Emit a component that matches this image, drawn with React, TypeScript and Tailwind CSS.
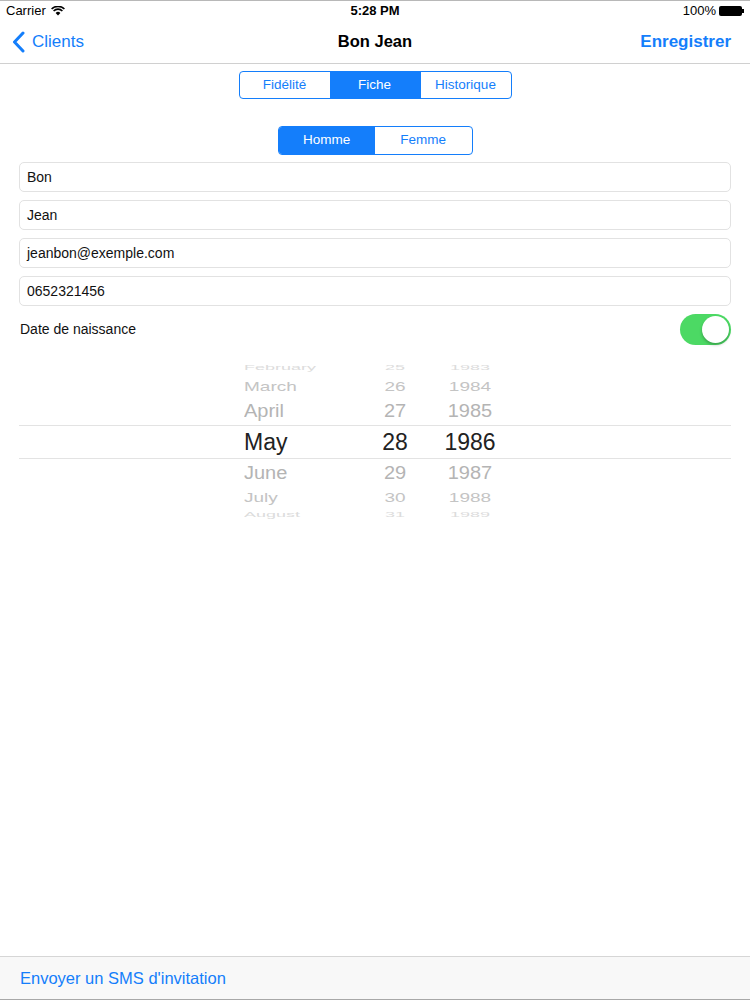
const font = { fontFamily: '"Liberation Sans", Arial, sans-serif' };

type Row = { m: string; d: string; y: string; h: string; cls: string };

// picker wheel rows, squashed toward the edges like the iOS cylinder
const rows: Row[] = [
  { m: "February", d: "25", y: "1983", h: "h-[16px]", cls: "text-[18px] scale-y-[0.35] text-[#dcdcdc]" },
  { m: "March", d: "26", y: "1984", h: "h-[21px]", cls: "text-[19px] scale-y-[0.72] text-[#c4c4c4]" },
  { m: "April", d: "27", y: "1985", h: "h-[28px]", cls: "text-[20px] scale-y-[0.9] text-[#b4b4b4]" },
  { m: "May", d: "28", y: "1986", h: "h-[34px]", cls: "text-[23px] text-[#222222]" },
  { m: "June", d: "29", y: "1987", h: "h-[27px]", cls: "text-[20px] scale-y-[0.9] text-[#b4b4b4]" },
  { m: "July", d: "30", y: "1988", h: "h-[22px]", cls: "text-[19px] scale-y-[0.72] text-[#c4c4c4]" },
  { m: "August", d: "31", y: "1989", h: "h-[14px]", cls: "text-[18px] scale-y-[0.35] text-[#dcdcdc]" },
];

function Field({ value }: { value: string }) {
  return (
    <div className="h-[30px] w-full flex items-center px-[7px] border border-[#e2e2e2] rounded-[5px] text-[14px] text-[#111]">
      {value}
    </div>
  );
}

export default function App() {
  return (
    <div style={font} className="w-[750px] h-[1000px] flex flex-col bg-white overflow-hidden border-t border-[#b8b8b8]">
      {/* status bar */}
      <div className="h-[19px] flex items-center justify-between px-[6px] text-[13px] text-black">
        <div className="flex items-center gap-[5px] w-[120px]">
          <span>Carrier</span>
          <svg width="14" height="10" viewBox="0 0 14 10">
            <path d="M7 9.5 L4.6 7 A3.4 3.4 0 0 1 9.4 7 Z" fill="#000" />
            <path d="M2.6 5 A6.2 6.2 0 0 1 11.4 5" stroke="#000" strokeWidth="1.6" fill="none" />
            <path d="M0.6 3 A9 9 0 0 1 13.4 3" stroke="#000" strokeWidth="1.6" fill="none" />
          </svg>
        </div>
        <span className="font-bold">5:28 PM</span>
        <div className="flex items-center justify-end gap-[3px] w-[120px]">
          <span>100%</span>
          <div className="flex items-center">
            <div className="w-[23px] h-[10px] bg-black rounded-[2px]" />
            <div className="w-[2px] h-[4px] bg-black" />
          </div>
        </div>
      </div>

      {/* nav bar */}
      <div className="h-[44px] flex items-center justify-between px-[12px] border-b border-[#d0d0d0]">
        <div className="flex items-center gap-[7px] w-[160px] text-[17px] text-[#147efb]">
          <svg width="13" height="22" viewBox="0 0 13 22">
            <path d="M11 2 L2.5 11 L11 20" stroke="#147efb" strokeWidth="3" fill="none" strokeLinecap="round" strokeLinejoin="round" />
          </svg>
          <span>Clients</span>
        </div>
        <span className="text-[16.5px] font-bold text-black">Bon Jean</span>
        <div className="w-[160px] flex justify-end pr-[7px] text-[17px] font-bold text-[#147efb]">Enregistrer</div>
      </div>

      <div className="flex flex-col px-[19px]">
        {/* main segmented control */}
        <div className="mt-[7px] self-center flex w-[273px] h-[28px] border border-[#147efb] rounded-[4px] overflow-hidden text-[13.5px]">
          <div className="flex-1 flex items-center justify-center text-[#147efb]">Fidélité</div>
          <div className="flex-1 flex items-center justify-center bg-[#147efb] text-white">Fiche</div>
          <div className="flex-1 flex items-center justify-center text-[#147efb] border-l border-[#147efb]">Historique</div>
        </div>

        {/* gender */}
        <div className="mt-[27px] self-center flex w-[195px] h-[29px] border border-[#147efb] rounded-[4px] overflow-hidden text-[13.5px]">
          <div className="flex-1 flex items-center justify-center bg-[#147efb] text-white">Homme</div>
          <div className="flex-1 flex items-center justify-center text-[#147efb]">Femme</div>
        </div>

        <div className="mt-[7px] flex flex-col gap-[8px]">
          <Field value="Bon" />
          <Field value="Jean" />
          <Field value="jeanbon@exemple.com" />
          <Field value="0652321456" />
        </div>

        <div className="mt-[8px] h-[31px] flex items-center justify-between">
          <span className="pl-[1px] text-[14px] text-[#111]">Date de naissance</span>
          <div className="w-[51px] h-[31px] rounded-full bg-[#4cd964] flex items-center justify-end p-[2px]">
            <div className="w-[27px] h-[27px] rounded-full bg-white shadow-[0_2px_3px_rgba(0,0,0,0.25)]" />
          </div>
        </div>

        {/* date picker */}
        <div className="mt-[15px] flex flex-col">
          {rows.map((r) => (
            <div
              key={r.m}
              className={`${r.h} flex items-center ${r.m === "May" ? "border-y border-[#e3e3e3]" : ""}`}
            >
              <div className="w-[224px]" />
              <div className={`w-[120px] pl-[1px] leading-none ${r.cls}`}>{r.m}</div>
              <div className={`w-[64px] text-center leading-none ${r.cls}`}>{r.d}</div>
              <div className={`w-[86px] text-center leading-none ${r.cls}`}>{r.y}</div>
            </div>
          ))}
        </div>
      </div>

      <div className="flex-1" />

      {/* bottom toolbar */}
      <div className="h-[44px] flex items-center px-[20px] bg-[#f8f8f8] border-t border-[#d6d6d6] border-b border-b-[#a8a8a8] text-[16.5px] text-[#147efb]">
        Envoyer un SMS d'invitation
      </div>
    </div>
  );
}
